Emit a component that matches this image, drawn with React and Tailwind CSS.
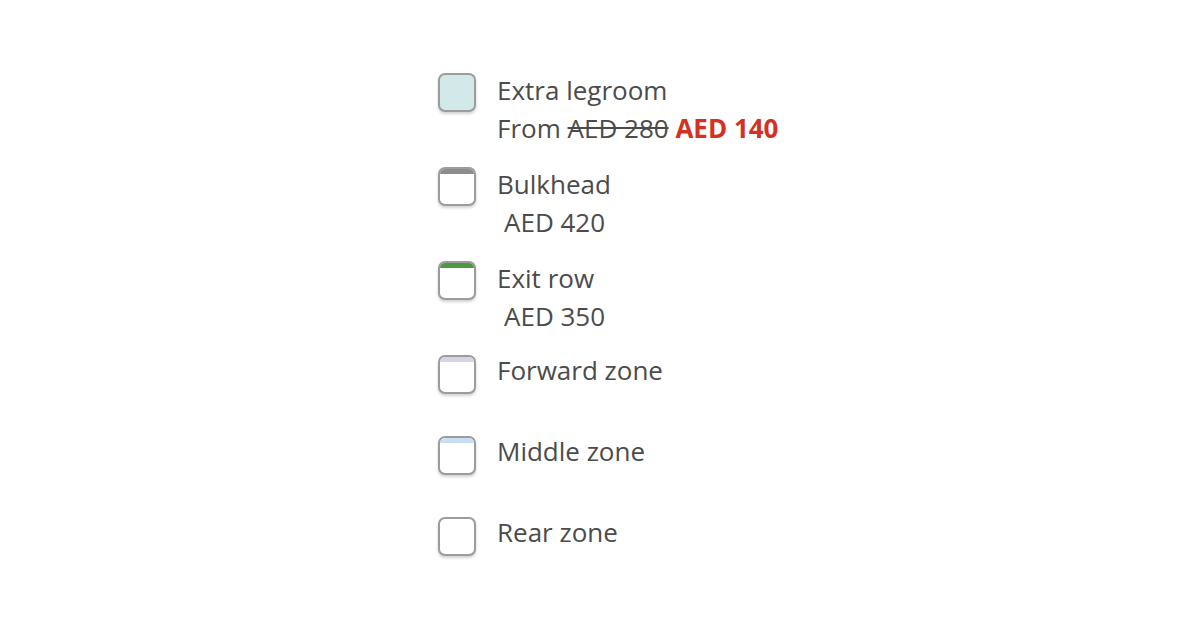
const seats = [
  { name: 'Extra legroom', fill: 'bg-[#d3e8e8]', bar: null, price: 'promo' },
  { name: 'Bulkhead', fill: 'bg-white', bar: 'bg-[#8c8c8c]', price: 'AED 420' },
  { name: 'Exit row', fill: 'bg-white', bar: 'bg-[#4f9a3e]', price: 'AED 350' },
  { name: 'Forward zone', fill: 'bg-white', bar: 'bg-[#d6d4e2]', price: null },
  { name: 'Middle zone', fill: 'bg-white', bar: 'bg-[#c9def2]', price: null },
  { name: 'Rear zone', fill: 'bg-white', bar: null, price: null },
];

const SeatBox = ({ fill, bar }) => (
  <div
    className={`w-[38px] h-[39px] shrink-0 rounded-[7px] border-2 border-[#9c9c9c] overflow-hidden shadow-[0_2px_3px_rgba(0,0,0,0.18)] ${fill}`}
  >
    {bar && <div className={`h-[5px] ${bar}`} />}
  </div>
);

export default function App() {
  return (
    <div className="w-[1200px] h-[628px] bg-white font-['Open_Sans',sans-serif] text-[#4b4b4b]">
      <div className="flex flex-col pl-[438px] pt-[73px]">
        {seats.map((s) => (
          <div
            key={s.name}
            className={`flex items-start gap-[21px] ${s.price ? 'h-[94px]' : 'h-[81px]'}`}
          >
            <SeatBox fill={s.fill} bar={s.bar} />
            <div className={`text-[26px] leading-[38px] ${s.price ? '-mt-[2px]' : '-mt-[4px]'}`}>
              <div>{s.name}</div>
              {s.price === 'promo' && (
                <div>
                  From <span className="line-through">AED 280</span>{' '}
                  <span className="font-bold text-[#d2321f]">AED 140</span>
                </div>
              )}
              {s.price && s.price !== 'promo' && <div className="pl-[7px]">{s.price}</div>}
            </div>
          </div>
        ))}
      </div>
    </div>
  );
}
